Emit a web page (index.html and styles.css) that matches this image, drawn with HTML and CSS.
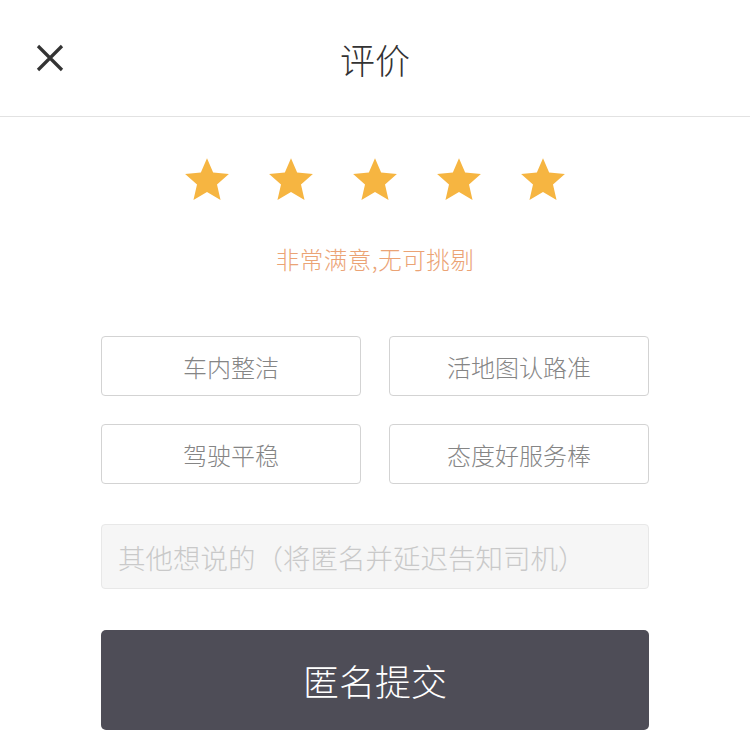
FILE: index.html
```html
<!DOCTYPE html>
<html lang="zh-CN">
<head>
<meta charset="utf-8">
<title>评价</title>
<link rel="stylesheet" href="styles.css">
</head>
<body>
<div class="page">
  <header class="header">
    <div class="close">
      <svg width="28" height="28" viewBox="0 0 28 28"><path d="M2 2 L26 26 M26 2 L2 26" stroke="#333" stroke-width="3.2" stroke-linecap="butt" fill="none"/></svg>
    </div>
    <h1 class="title">评价</h1>
    <div></div>
  </header>
  <main class="content">
    <div class="stars">
      <svg class="star" viewBox="0 0 24 24"><polygon points="12,1.5 14.95,8.4 22.5,9.1 16.8,14.1 18.5,21.6 12,17.7 5.5,21.6 7.2,14.1 1.5,9.1 9.05,8.4"/></svg>
      <svg class="star" viewBox="0 0 24 24"><polygon points="12,1.5 14.95,8.4 22.5,9.1 16.8,14.1 18.5,21.6 12,17.7 5.5,21.6 7.2,14.1 1.5,9.1 9.05,8.4"/></svg>
      <svg class="star" viewBox="0 0 24 24"><polygon points="12,1.5 14.95,8.4 22.5,9.1 16.8,14.1 18.5,21.6 12,17.7 5.5,21.6 7.2,14.1 1.5,9.1 9.05,8.4"/></svg>
      <svg class="star" viewBox="0 0 24 24"><polygon points="12,1.5 14.95,8.4 22.5,9.1 16.8,14.1 18.5,21.6 12,17.7 5.5,21.6 7.2,14.1 1.5,9.1 9.05,8.4"/></svg>
      <svg class="star" viewBox="0 0 24 24"><polygon points="12,1.5 14.95,8.4 22.5,9.1 16.8,14.1 18.5,21.6 12,17.7 5.5,21.6 7.2,14.1 1.5,9.1 9.05,8.4"/></svg>
    </div>
    <p class="verdict">非常满意,无可挑剔</p>
    <div class="tags">
      <div class="tag">车内整洁</div>
      <div class="tag">活地图认路准</div>
      <div class="tag">驾驶平稳</div>
      <div class="tag">态度好服务棒</div>
    </div>
    <div class="comment">其他想说的（将匿名并延迟告知司机）</div>
    <button class="submit">匿名提交</button>
  </main>
</div>
</body>
</html>
```
FILE: styles.css
```css
* { box-sizing: border-box; }
html, body {
  margin: 0;
  padding: 0;
  background: #ffffff;
  font-family: "Noto Sans CJK SC", "Noto Sans", sans-serif;
}
.page {
  width: 750px;
  min-height: 750px;
}
.header {
  height: 117px;
  border-bottom: 1px solid #e2e2e2;
  display: grid;
  grid-template-columns: 1fr auto 1fr;
  align-items: center;
}
.close {
  padding-left: 36px;
  display: flex;
  align-items: center;
}
.close svg { display: block; }
.title {
  margin: 0;
  font-size: 35px;
  font-weight: 300;
  color: #333333;
  line-height: 1;
}
.content {
  width: 548px;
  margin: 0 auto;
  display: flex;
  flex-direction: column;
  align-items: stretch;
}
.stars {
  margin-top: 38px;
  display: flex;
  justify-content: center;
  gap: 34px;
}
.star {
  width: 50px;
  height: 50px;
  fill: #f6b541;
  display: block;
}
.verdict {
  margin: 39px 0 0;
  height: 30px;
  line-height: 30px;
  text-align: center;
  font-size: 23.5px;
  font-weight: 300;
  color: #eba375;
  letter-spacing: 0.5px;
}
.tags {
  margin-top: 62px;
  display: grid;
  grid-template-columns: 1fr 1fr;
  column-gap: 28px;
  row-gap: 28px;
}
.tag {
  height: 60px;
  border: 1px solid #d3d3d3;
  border-radius: 4px;
  display: flex;
  align-items: center;
  justify-content: center;
  font-size: 24px;
  font-weight: 300;
  color: #858585;
}
.comment {
  margin-top: 40px;
  height: 65px;
  background: #f6f6f6;
  border: 1px solid #e8e8e8;
  border-radius: 4px;
  padding-left: 16px;
  display: flex;
  align-items: center;
  font-size: 27.5px;
  font-weight: 300;
  color: #c9c9c9;
  white-space: nowrap;
}
.submit {
  margin-top: 41px;
  height: 100px;
  border: none;
  border-radius: 5px;
  background: #4e4d57;
  color: #ffffff;
  font-family: inherit;
  font-size: 36px;
  font-weight: 300;
  padding: 0;
}
```
